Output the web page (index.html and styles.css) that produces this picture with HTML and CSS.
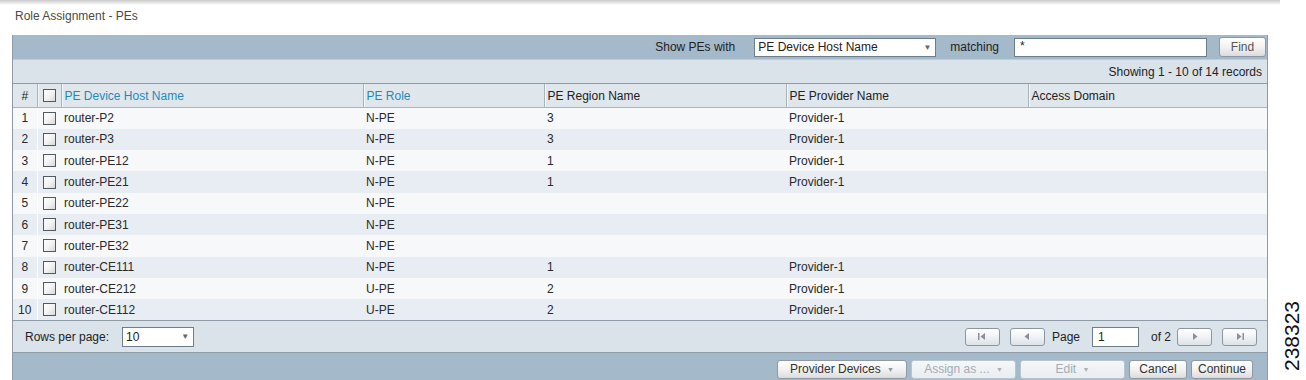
FILE: index.html
```html
<!DOCTYPE html>
<html>
<head>
<meta charset="utf-8">
<link rel="stylesheet" href="styles.css">
</head>
<body>
<div class="topshade"></div>
<div class="page">
  <div class="title">Role Assignment - PEs</div>
  <div class="panel">
    <div class="toolbar">
      <span class="lbl">Show PEs with</span>
      <div class="select sel-filter"><span>PE Device Host Name</span><span class="arr">&#9660;</span></div>
      <span class="lbl">matching</span>
      <div class="input inp-match">*</div>
      <button class="btn find">Find</button>
    </div>
    <div class="info">Showing 1 - 10 of 14 records</div>
    <table class="grid">
      <colgroup>
        <col class="c-num"><col class="c-cb"><col class="c-host"><col class="c-role"><col class="c-region"><col class="c-prov"><col class="c-acc">
      </colgroup>
      <thead>
        <tr>
          <th class="num">#</th>
          <th class="cb"><span class="check"></span></th>
          <th class="link">PE Device Host Name</th>
          <th class="link">PE Role</th>
          <th>PE Region Name</th>
          <th>PE Provider Name</th>
          <th>Access Domain</th>
        </tr>
      </thead>
      <tbody>
        <tr><td class="num">1</td><td class="cb"><span class="check"></span></td><td>router-P2</td><td>N-PE</td><td>3</td><td>Provider-1</td><td></td></tr>
        <tr><td class="num">2</td><td class="cb"><span class="check"></span></td><td>router-P3</td><td>N-PE</td><td>3</td><td>Provider-1</td><td></td></tr>
        <tr><td class="num">3</td><td class="cb"><span class="check"></span></td><td>router-PE12</td><td>N-PE</td><td>1</td><td>Provider-1</td><td></td></tr>
        <tr><td class="num">4</td><td class="cb"><span class="check"></span></td><td>router-PE21</td><td>N-PE</td><td>1</td><td>Provider-1</td><td></td></tr>
        <tr><td class="num">5</td><td class="cb"><span class="check"></span></td><td>router-PE22</td><td>N-PE</td><td></td><td></td><td></td></tr>
        <tr><td class="num">6</td><td class="cb"><span class="check"></span></td><td>router-PE31</td><td>N-PE</td><td></td><td></td><td></td></tr>
        <tr><td class="num">7</td><td class="cb"><span class="check"></span></td><td>router-PE32</td><td>N-PE</td><td></td><td></td><td></td></tr>
        <tr><td class="num">8</td><td class="cb"><span class="check"></span></td><td>router-CE111</td><td>N-PE</td><td>1</td><td>Provider-1</td><td></td></tr>
        <tr><td class="num">9</td><td class="cb"><span class="check"></span></td><td>router-CE212</td><td>U-PE</td><td>2</td><td>Provider-1</td><td></td></tr>
        <tr><td class="num">10</td><td class="cb"><span class="check"></span></td><td>router-CE112</td><td>U-PE</td><td>2</td><td>Provider-1</td><td></td></tr>
      </tbody>
    </table>
    <div class="footer">
      <div class="rpp">
        <span>Rows per page:</span>
        <div class="select sel-rows"><span>10</span><span class="arr">&#9660;</span></div>
      </div>
      <div class="pager">
        <button class="pbtn pfirst"><svg width="10" height="9" viewBox="0 0 10 9"><rect x="1" y="1" width="1.5" height="7" fill="#8a9099"/><path d="M8 1 L3.5 4.5 L8 8 Z" fill="#8a9099"/></svg></button>
        <button class="pbtn pprev"><svg width="10" height="9" viewBox="0 0 10 9"><path d="M7 1 L2.5 4.5 L7 8 Z" fill="#8a9099"/></svg></button>
        <span class="plbl">Page</span>
        <div class="input inp-page">1</div>
        <span class="plbl of">of 2</span>
        <button class="pbtn pnext"><svg width="10" height="9" viewBox="0 0 10 9"><path d="M3 1 L7.5 4.5 L3 8 Z" fill="#8a9099"/></svg></button>
        <button class="pbtn plast"><svg width="10" height="9" viewBox="0 0 10 9"><path d="M2 1 L6.5 4.5 L2 8 Z" fill="#8a9099"/><rect x="7.5" y="1" width="1.5" height="7" fill="#8a9099"/></svg></button>
      </div>
    </div>
    <div class="actions">
      <button class="btn abtn w-prov">Provider Devices <span class="darr">&#9660;</span></button>
      <button class="btn abtn dis w-assign">Assign as ... <span class="darr">&#9660;</span></button>
      <button class="btn abtn dis w-edit">Edit <span class="darr">&#9660;</span></button>
      <button class="btn abtn w-cancel">Cancel</button>
      <button class="btn abtn w-cont">Continue</button>
    </div>
  </div>
</div>
<div class="fig">238323</div>
</body>
</html>
```
FILE: styles.css
```css
html, body {
  margin: 0;
  padding: 0;
  background: #ffffff;
  font-family: "Liberation Sans", Arial, sans-serif;
  font-size: 12px;
  color: #333333;
  width: 1306px;
  height: 380px;
  overflow: hidden;
}

.topshade {
  width: 1280px;
  height: 5px;
  background: linear-gradient(to bottom, #c9c9c9, #ffffff);
}

.page {
  padding-left: 12px;
  width: 1256px;
}

.title {
  height: 30px;
  line-height: 22px;
  padding-left: 3px;
  color: #4a4a4a;
  font-size: 12px;
}

.panel {
  border-left: 1px solid #8f9ca8;
  border-right: 1px solid #8f9ca8;
  width: 1256px;
  box-sizing: border-box;
}

.toolbar {
  height: 24px;
  background: #a4b9c9;
  display: flex;
  align-items: center;
  justify-content: flex-end;
  padding-right: 1px;
  box-sizing: border-box;
}

.toolbar .lbl {
  color: #222;
}

.select {
  background: #fff;
  border: 1px solid #6e7d8a;
  box-sizing: border-box;
  display: flex;
  align-items: center;
  justify-content: space-between;
  padding: 0 4px 0 3px;
  color: #222;
}

.select .arr {
  font-size: 8px;
  color: #666;
}

.sel-filter {
  width: 182px;
  height: 19px;
  margin: 0 14px 0 19px;
}

.input {
  background: #fff;
  border: 1px solid #6e7d8a;
  box-sizing: border-box;
  padding: 0 5px;
  color: #222;
  display: flex;
  align-items: center;
}

.inp-match {
  width: 193px;
  height: 19px;
  margin-left: 15px;
  margin-right: 12px;
  align-items: flex-start;
  line-height: 15px;
}

.btn {
  font-family: "Liberation Sans", Arial, sans-serif;
  font-size: 12px;
  color: #333;
  background: linear-gradient(to bottom, #ffffff 0%, #f2f2f2 50%, #dcdcdc 100%);
  border: 1px solid #8d99a4;
  border-radius: 3px;
  padding: 0;
  box-sizing: border-box;
  cursor: pointer;
}

.find {
  width: 47px;
  height: 20px;
  color: #555;
}

.info {
  height: 24px;
  background: #dbe3ea;
  text-align: right;
  line-height: 25px;
  padding-right: 5px;
  color: #222;
  border-top: 1px solid #c2ccd5;
  box-sizing: border-box;
}

.grid {
  border-collapse: collapse;
  table-layout: fixed;
  width: 1254px;
}

.c-num { width: 24px; }
.c-cb { width: 24px; }
.c-host { width: 302px; }
.c-role { width: 181px; }
.c-region { width: 242px; }
.c-prov { width: 242px; }
.c-acc { width: 239px; }

.grid thead tr {
  background: #dfe6ec;
  height: 24px;
}

.grid th {
  font-weight: normal;
  text-align: left;
  padding: 0 3px;
  border-top: 1px solid #8f9ca8;
  border-bottom: 1px solid #a9b5bf;
  border-left: 1px solid #a7b3bd;
  box-shadow: inset 1px 0 0 #f4f7f9;
  color: #222;
  white-space: nowrap;
}

.grid th:first-child {
  border-left: none;
  box-shadow: none;
}

.grid th.link {
  color: #1f8ab8;
}

.grid th.num,
.grid td.num {
  text-align: center;
  padding: 0;
}

.grid th.cb,
.grid td.cb {
  padding: 0 0 0 5px;
}

.grid tbody tr {
  height: 21.3px;
}

.grid tbody tr:nth-child(odd) {
  background: #f6f8fa;
}

.grid tbody tr:nth-child(even) {
  background: #e7edf2;
}

.grid td {
  padding: 0 3px;
  color: #2a2a2a;
  white-space: nowrap;
}

.grid td.num {
  border-right: 1px solid #ffffff;
}

.check {
  display: block;
  width: 13px;
  height: 13px;
  box-sizing: border-box;
  border: 1px solid #505a63;
  background: linear-gradient(135deg, #ffffff 0%, #f3f3f3 50%, #d8d8d8 100%);
}

.footer {
  height: 33px;
  background: #dbe3ea;
  border-top: 1px solid #8f9ca8;
  border-bottom: 1px solid #8f9ca8;
  box-sizing: border-box;
  display: flex;
  align-items: center;
  justify-content: space-between;
  padding: 0 10px 0 12px;
}

.rpp {
  display: flex;
  align-items: center;
  color: #222;
}

.sel-rows {
  width: 72px;
  height: 20px;
  margin-left: 13px;
}

.pager {
  display: flex;
  align-items: center;
}

.pbtn {
  width: 35px;
  height: 18px;
  border: 1px solid #8a97a3;
  border-radius: 3px;
  background: linear-gradient(to bottom, #ffffff 0%, #eef1f4 55%, #dde2e7 100%);
  display: flex;
  align-items: center;
  justify-content: center;
  padding: 0;
  box-sizing: border-box;
}

.pprev { margin-left: 10px; }
.plbl { color: #222; margin-left: 7px; }
.inp-page { width: 47px; height: 20px; margin-left: 12px; }
.of { margin-left: 12px; margin-right: 6px; }
.plast { margin-left: 10px; }

.actions {
  height: 30px;
  background: #a4b9c9;
  display: flex;
  align-items: center;
  justify-content: flex-end;
  gap: 4px;
  padding-right: 14px;
  padding-top: 2px;
  box-sizing: border-box;
}

.abtn {
  height: 19px;
  color: #333;
}

.abtn.dis {
  color: #a3acb4;
  background: linear-gradient(to bottom, #f5f7f9, #e9edf0);
  border-color: #b8c5cf;
}

.darr {
  font-size: 7px;
  color: #8c96a0;
  margin-left: 3px;
  vertical-align: 1px;
}

.abtn.dis .darr { color: #a8b1b9; }

.w-prov { width: 130px; }
.w-assign { width: 105px; }
.w-edit { width: 105px; }
.w-cancel { width: 58px; }
.w-cont { width: 62px; }

.fig {
  position: absolute;
  left: 1256px;
  top: 324px;
  width: 72px;
  text-align: center;
  font-family: "Liberation Sans", Arial, sans-serif;
  font-size: 21px;
  color: #111;
  transform: rotate(-90deg);
  line-height: 24px;
}
```
